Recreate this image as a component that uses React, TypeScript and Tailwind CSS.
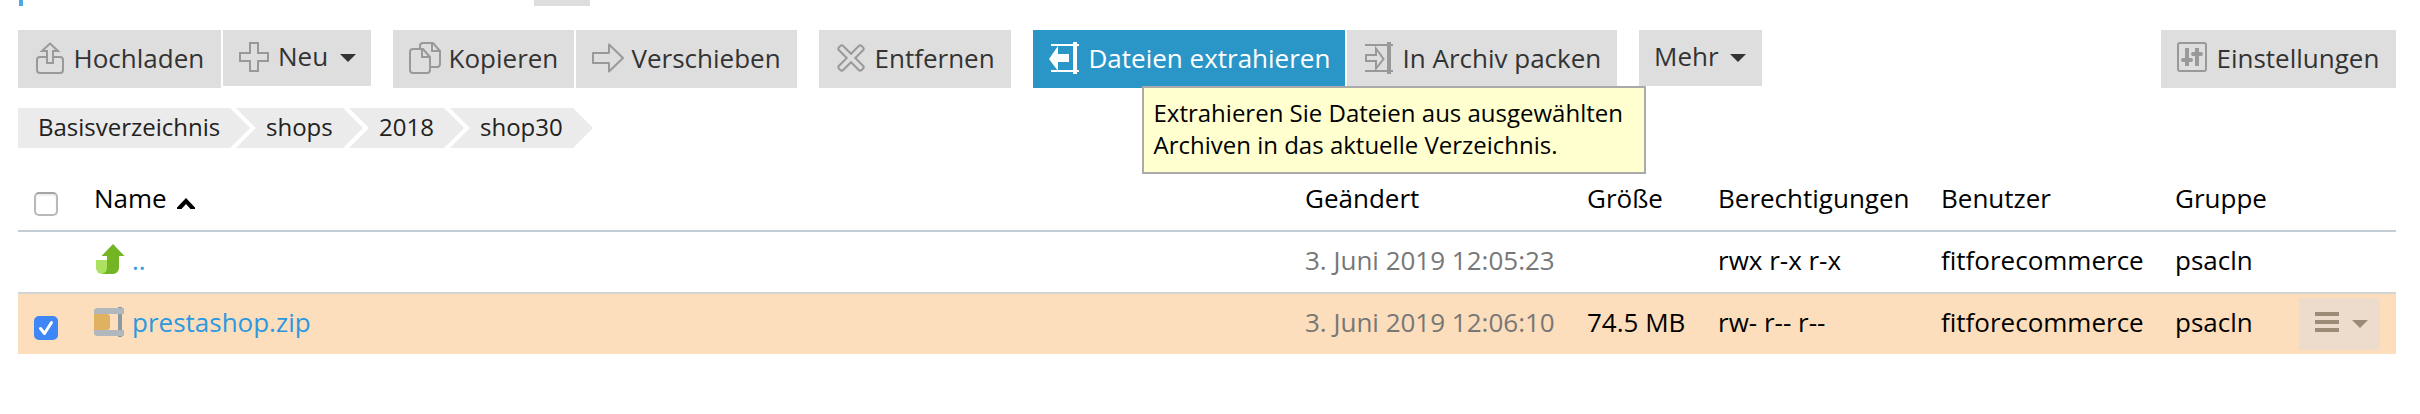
import type { ReactNode } from "react";

function Icon({ children }: { children: ReactNode }) {
  return (
    <svg width="32" height="32" viewBox="0 0 32 32" fill="none" stroke="#999" strokeWidth="2" className="block shrink-0">
      {children}
    </svg>
  );
}

const UploadIcon = () => (
  <Icon>
    <path d="M12 15H6a3 3 0 0 0-3 3v10a3 3 0 0 0 3 3h20a3 3 0 0 0 3-3V18a3 3 0 0 0-3-3h-6" />
    <path d="M16 1.5L24 9H19V21H13V9H8Z" />
  </Icon>
);
const PlusIcon = () => (
  <Icon>
    <path d="M11 1h8v10h10v8H19v10h-8V19H1v-8h10z" />
  </Icon>
);
const CopyIcon = () => (
  <Icon>
    <path d="M4 7h10l7 8v13a3 3 0 0 1-3 3H4a3 3 0 0 1-3-3V10a3 3 0 0 1 3-3zM13 7v8h8" />
    <path d="M11 7V4a3 3 0 0 1 3-3h10l7 8v13a3 3 0 0 1-3 3h-6M23 1v8h8" />
  </Icon>
);
const MoveIcon = () => (
  <Icon>
    <path d="M1 11h16V2.5L31 16 17 29.5V21H1z" strokeLinejoin="round" />
  </Icon>
);
const RemoveIcon = () => (
  <Icon>
    <path
      transform="rotate(45 16 16)"
      d="M15 0h2a2 2 0 0 1 2 2v11h11a2 2 0 0 1 2 2v2a2 2 0 0 1-2 2H19v11a2 2 0 0 1-2 2h-2a2 2 0 0 1-2-2V19H2a2 2 0 0 1-2-2v-2a2 2 0 0 1 2-2h11V2a2 2 0 0 1 2-2z"
    />
  </Icon>
);
const ExtractIcon = () => (
  <Icon>
    <path d="M0 17L9 4V12H20V20H9V29z" fill="#fff" stroke="none" />
    <path d="M2 3H30M2 29H30" stroke="#fff" />
    <path d="M26 0V32" stroke="#fff" strokeWidth="4" />
  </Icon>
);
const PackIcon = () => (
  <Icon>
    <path d="M3 13h10V6.5L20.5 17 13 26.5V19H3z" />
    <path d="M2 3H30M2 29H30" />
    <path d="M26 0V32" strokeWidth="4" />
  </Icon>
);
const SettingsIcon = () => (
  <Icon>
    <rect x="1" y="1" width="28" height="28" rx="2" />
    <path d="M10 6V24M20 6V24" strokeWidth="4" />
    <path d="M6 18H14M16 12H24" strokeWidth="4" strokeLinecap="round" />
  </Icon>
);

const Caret = ({ className = "" }: { className?: string }) => (
  <svg width="16" height="8" viewBox="0 0 16 8" className={`block shrink-0 ${className}`} fill="currentColor">
    <path d="M0 0H16L8 8z" />
  </svg>
);

type ButtonProps = { icon?: ReactNode; label: string; className: string; menu?: boolean; active?: boolean };

function Button({ icon, label, className, menu, active }: ButtonProps) {
  return (
    <button
      className={`flex shrink-0 items-start whitespace-nowrap pt-3 text-left leading-9 ${icon ? "pl-4" : "pl-[15px]"} ${
        menu ? "h-14" : "h-[58px]"
      } ${active ? "bg-[#2a96c8] text-white" : "bg-[#dedede] text-[#333]"} ${className}`}
    >
      {icon}
      <span className={menu ? `-mt-1 ${icon ? "ml-[7px]" : ""}` : "-mt-0.5 ml-[7.5px]"}>{label}</span>
      {menu && <Caret className="ml-[11.5px] mt-3" />}
    </button>
  );
}

const chevron = "-ml-3.5 pl-[30px] [clip-path:polygon(0_0,calc(100%-20px)_0,100%_50%,calc(100%-20px)_100%,0_100%,20px_50%)]";
const crumbs = [
  { label: "Basisverzeichnis", box: "w-[232px] pl-5 [clip-path:polygon(0_0,212px_0,100%_50%,212px_100%,0_100%)]" },
  { label: "shops", box: `w-[127px] ${chevron}` },
  { label: "2018", box: `w-[115px] ${chevron}` },
  { label: "shop30", box: `w-[143px] ${chevron}` },
];

const columns = "grid grid-cols-[76px_1211px_282px_131px_223px_234px_1fr]";

type RowProps = { className: string; check?: ReactNode; name: ReactNode; date: string; size: string; perms: string; action?: ReactNode };

function Row({ className, check, name, date, size, perms, action }: RowProps) {
  return (
    <div className={`${columns} leading-[56px] ${className}`}>
      <div className="pl-4">{check}</div>
      <div className="flex text-[#2b99e0]">{name}</div>
      <div className="text-[#777]">{date}</div>
      <div>{size}</div>
      <div>{perms}</div>
      <div>fitforecommerce</div>
      <div className="flex justify-between pr-4">
        <span>psacln</span>
        {action}
      </div>
    </div>
  );
}

export default function App() {
  return (
    <div className="h-[414px] w-[2420px] overflow-hidden bg-white pl-[18px] pr-6 font-['Open_Sans',sans-serif] text-[26px] text-black">
      <div className="flex h-[30px] items-start">
        <div className="ml-px h-1.5 w-1 bg-[#4aa8e4]" />
        <div className="ml-[511px] h-1.5 w-14 bg-[#dedede]" />
      </div>

      <div className="flex h-[78px] items-start">
        <Button className="w-[203px]" icon={<UploadIcon />} label="Hochladen" />
        <Button className="ml-0.5 w-[148px]" icon={<PlusIcon />} label="Neu" menu />
        <Button className="ml-[22px] w-[181px]" icon={<CopyIcon />} label="Kopieren" />
        <Button className="ml-0.5 w-[221px]" icon={<MoveIcon />} label="Verschieben" />
        <Button className="ml-[22px] w-[192px]" icon={<RemoveIcon />} label="Entfernen" />
        <div className="relative ml-[22px]">
          <Button className="w-[312px]" icon={<ExtractIcon />} label="Dateien extrahieren" active />
          <div className="absolute left-[109px] top-14 z-10 h-[88px] w-[504px] whitespace-nowrap border-2 border-[#aaa] bg-[#ffffcf] pl-[9.5px] pt-[8.5px] text-2xl leading-8">
            Extrahieren Sie Dateien aus ausgewählten
            <br />
            Archiven in das aktuelle Verzeichnis.
          </div>
        </div>
        <Button className="ml-0.5 w-[270px]" icon={<PackIcon />} label="In Archiv packen" />
        <Button className="ml-[22px] w-[123px]" label="Mehr" menu />
        <Button className="ml-auto w-[235px]" icon={<SettingsIcon />} label="Einstellungen" />
      </div>

      <nav className="flex h-10 text-2xl leading-[37px] text-[#222]">
        {crumbs.map((c) => (
          <span key={c.label} className={`shrink-0 bg-[#ebebeb] ${c.box}`}>
            {c.label}
          </span>
        ))}
      </nav>

      <div className={`${columns} h-[84px] border-b-2 border-[#c3cdd6] pt-8 leading-9`}>
        <div className="pl-4 pt-3">
          <div className="size-6 rounded-[5px] border-2 border-[#b9b9b9] border-t-[#a5a5a5] bg-white shadow-[inset_0_2px_2px_#eee]" />
        </div>
        <div className="flex">
          Name
          <svg width="18" height="11" viewBox="0 0 18 11" className="ml-2.5 mt-[18px] block">
            <path d="M0 11V9.5L9 0l9 9.5V11h-4.500L9 6 4.500 11z" />
          </svg>
        </div>
        <div>Geändert</div>
        <div>Größe</div>
        <div>Berechtigungen</div>
        <div>Benutzer</div>
        <div>Gruppe</div>
      </div>

      <Row
        className="h-[62px] border-b-2 border-[#d2d4d5]"
        name={
          <>
            <svg width="32" height="32" viewBox="0 0 32 32" className="mr-1.5 mt-3 block">
              <path d="M2 16h12v14H8a6 6 0 0 1-6-6z" fill="#ade162" />
              <path d="M19 0l11.500 12H25v12a6 6 0 0 1-6 6H7.500Q13 29 13 23V12H7.500z" fill="#73b524" />
            </svg>
            ..
          </>
        }
        date="3. Juni 2019 12:05:23"
        size=""
        perms="rwx r-x r-x"
      />
      <Row
        className="h-[60px] bg-[#fcdebc]"
        check={
          <svg width="24" height="24" viewBox="0 0 24 24" className="mt-[22px] block">
            <rect width="24" height="24" rx="5" fill="#3f87f7" />
            <path d="M6.500 12.500l4 5L17.500 6.500" fill="none" stroke="#fff" strokeWidth="3" strokeLinecap="round" strokeLinejoin="round" />
          </svg>
        }
        name={
          <>
            <svg width="32" height="32" viewBox="0 0 32 32" className="mr-1.5 mt-3 block">
              <path d="M24 1h4v30h-4z" fill="#8c99a3" />
              <path d="M2 2h28v6H0V4zM0 24h30v6H2l-2-2z" fill="#b0b7bd" />
              <path d="M0 8h14l2 2v12l-2 2H0z" fill="#e1b162" />
            </svg>
            prestashop.zip
          </>
        }
        date="3. Juni 2019 12:06:10"
        size="74.5 MB"
        perms="rw- r-- r--"
        action={
          <button className="mt-1 flex h-[52px] w-[81px] items-start bg-[#eddccb] pl-4 pt-3.5 text-[#9d8a77]">
            <span className="flex w-6 flex-col gap-1">
              <span className="h-1 bg-current" />
              <span className="h-1 bg-current" />
              <span className="h-1 bg-current" />
            </span>
            <Caret className="ml-[13px] mt-2" />
          </button>
        }
      />
    </div>
  );
}
